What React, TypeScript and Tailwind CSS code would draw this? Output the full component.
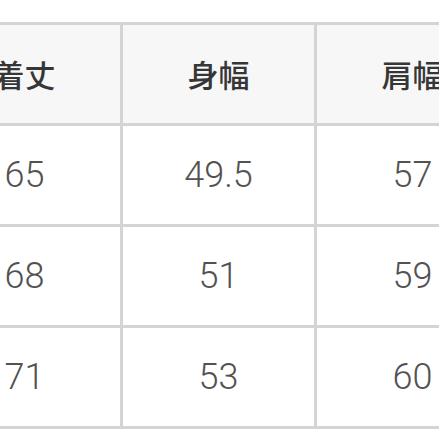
const headers = ["着丈", "身幅", "肩幅"];

const rows = [
  ["65", "49.5", "57"],
  ["68", "51", "59"],
  ["71", "53", "60"],
];

export default function App() {
  return (
    <div className="w-[439px] h-[439px] overflow-hidden bg-white">
      <div className="mt-[22px] ml-[-74px] w-max grid grid-cols-[191px_191px_191px] auto-rows-[98px] gap-[3px] p-[3px] bg-[#d4d4d4]">
        {headers.map((h) => (
          <div
            key={h}
            className="flex items-center justify-center bg-[#f7f7f7] text-[31px] font-medium text-[#363636] [font-family:'Noto_Sans_CJK_JP',sans-serif]"
          >
            {h}
          </div>
        ))}
        {rows.flat().map((v, i) => (
          <div
            key={i}
            className="flex items-center justify-center bg-white text-[36px] font-light text-[#525252] [font-family:Roboto,'Liberation_Sans',sans-serif]"
          >
            {v}
          </div>
        ))}
      </div>
    </div>
  );
}
